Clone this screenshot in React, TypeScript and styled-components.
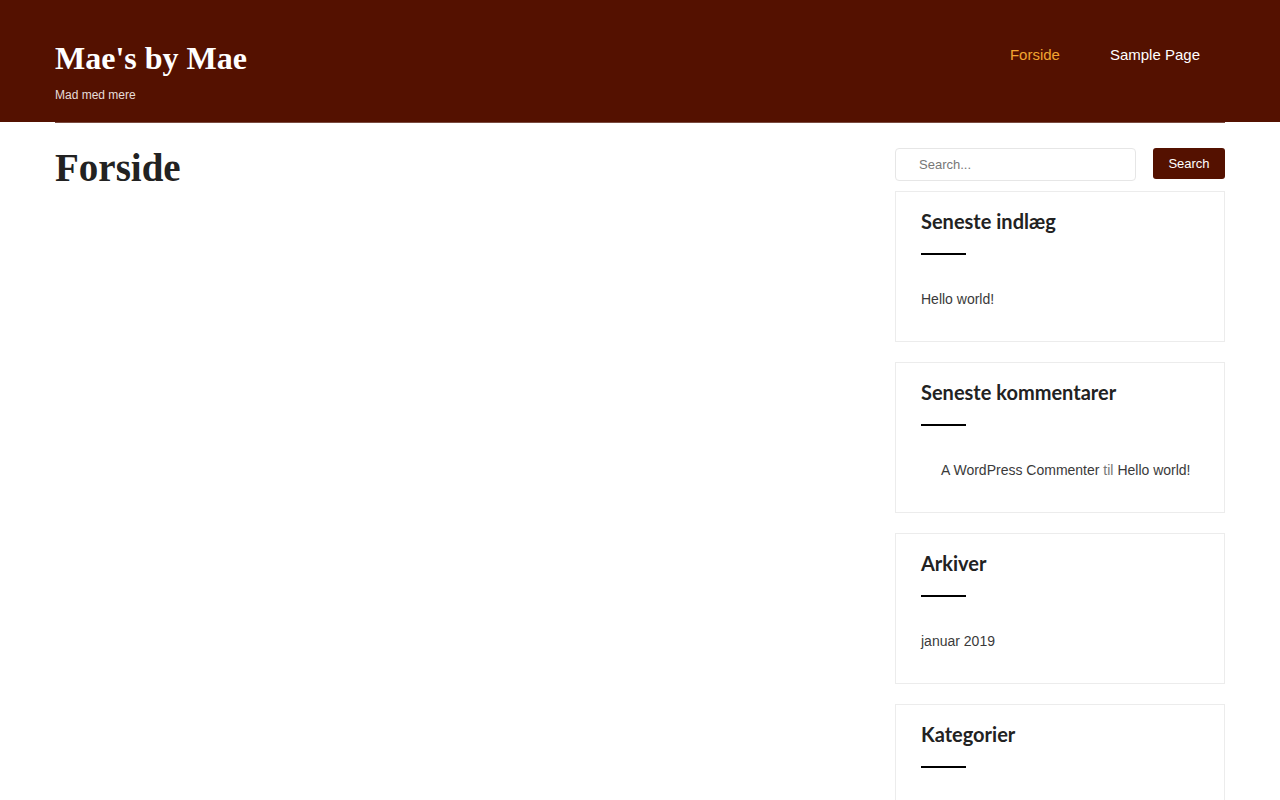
import React from 'react';
import styled, { createGlobalStyle } from 'styled-components';

const GlobalStyle = createGlobalStyle`
  html, body {
    margin: 0;
    padding: 0;
    background: #fff;
    font-family: "Liberation Sans", Arial, sans-serif;
    color: #333;
  }
  * { box-sizing: border-box; }
`;

const HeaderBar = styled.header`
  background: #541100;
  height: 122px;
`;

const Container = styled.div`
  width: 1170px;
  margin: 0 auto;
`;

const HeaderInner = styled(Container)`
  display: flex;
  justify-content: space-between;
  align-items: flex-start;
  padding-top: 38px;
`;

const Branding = styled.div`
  display: flex;
  flex-direction: column;
`;

const SiteTitle = styled.a`
  font-family: "Liberation Serif", "Times New Roman", serif;
  font-weight: 700;
  font-size: 32px;
  line-height: 40px;
  color: #fff;
  text-decoration: none;
`;

const Tagline = styled.p`
  margin: 9px 0 0;
  font-size: 12px;
  line-height: 16px;
  color: #e6dcd9;
`;

const Nav = styled.nav`
  display: flex;
  margin-top: 7px;
`;

const NavLink = styled.a<{ $active?: boolean }>`
  font-size: 15px;
  line-height: 20px;
  padding: 0 25px;
  color: ${(p) => (p.$active ? '#f2a531' : '#fff')};
  text-decoration: none;
`;

const Divider = styled(Container)`
  border-top: 1px solid #7a4b40;
`;

const Content = styled(Container)`
  display: flex;
  justify-content: space-between;
  padding-top: 25px;
`;

const Main = styled.main`
  width: 800px;
`;

const PageTitle = styled.h1`
  margin: 0;
  font-family: "Liberation Serif", "Times New Roman", serif;
  font-weight: 700;
  font-size: 39px;
  line-height: 40px;
  color: #222;
`;

const Sidebar = styled.aside`
  width: 330px;
  display: flex;
  flex-direction: column;
  gap: 20px;
`;

const SearchForm = styled.form`
  display: flex;
  justify-content: space-between;
  align-items: flex-start;
  margin-bottom: -10px;
`;

const SearchInput = styled.input`
  width: 241px;
  height: 33px;
  border: 1px solid #e6e6e6;
  border-radius: 4px;
  padding: 0 23px;
  font-family: "Liberation Sans", Arial, sans-serif;
  font-size: 13px;
  color: #333;
  outline: none;
  &::placeholder { color: #777; }
`;

const SearchButton = styled.button`
  width: 72px;
  height: 31px;
  border: none;
  border-radius: 3px;
  background: #541100;
  color: #fff;
  font-family: "Liberation Sans", Arial, sans-serif;
  font-size: 13px;
  padding: 0;
`;

const Widget = styled.section`
  border: 1px solid #ececec;
  padding: 16px 25px 26px;
  min-height: 151px;
`;

const WidgetTitle = styled.h2`
  margin: 0;
  font-family: Lato, "Open Sans", sans-serif;
  font-weight: 700;
  font-size: 20px;
  line-height: 26px;
  color: #222;
  &::after {
    content: '';
    display: block;
    width: 45px;
    height: 2px;
    background: #000;
    margin-top: 19px;
  }
`;

const List = styled.ul<{ $indent?: boolean }>`
  list-style: none;
  margin: 34px 0 0;
  padding: 0 0 0 ${(p) => (p.$indent ? '20px' : '0')};
  font-size: 14px;
  line-height: 20px;
`;

const Link = styled.a`
  color: #3a3a3a;
  text-decoration: none;
`;

const Muted = styled.span`
  color: #777;
`;

export default function App() {
  return (
    <>
      <GlobalStyle />
      <HeaderBar>
        <HeaderInner>
          <Branding>
            <SiteTitle href="#">Mae's by Mae</SiteTitle>
            <Tagline>Mad med mere</Tagline>
          </Branding>
          <Nav>
            <NavLink $active href="#">Forside</NavLink>
            <NavLink href="#">Sample Page</NavLink>
          </Nav>
        </HeaderInner>
      </HeaderBar>
      <Divider />
      <Content>
        <Main>
          <PageTitle>Forside</PageTitle>
        </Main>
        <Sidebar>
          <SearchForm onSubmit={(e) => e.preventDefault()}>
            <SearchInput type="search" placeholder="Search..." />
            <SearchButton type="submit">Search</SearchButton>
          </SearchForm>
          <Widget>
            <WidgetTitle>Seneste indlæg</WidgetTitle>
            <List>
              <li><Link href="#">Hello world!</Link></li>
            </List>
          </Widget>
          <Widget>
            <WidgetTitle>Seneste kommentarer</WidgetTitle>
            <List $indent>
              <li>
                <Link href="#">A WordPress Commenter</Link> <Muted>til</Muted>{' '}
                <Link href="#">Hello world!</Link>
              </li>
            </List>
          </Widget>
          <Widget>
            <WidgetTitle>Arkiver</WidgetTitle>
            <List>
              <li><Link href="#">januar 2019</Link></li>
            </List>
          </Widget>
          <Widget>
            <WidgetTitle>Kategorier</WidgetTitle>
          </Widget>
        </Sidebar>
      </Content>
    </>
  );
}
